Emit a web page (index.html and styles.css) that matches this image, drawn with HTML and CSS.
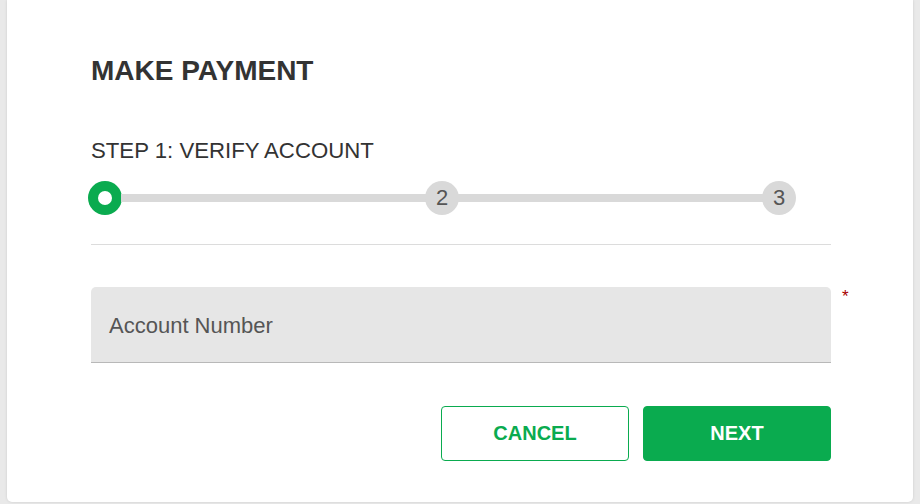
FILE: index.html
```html
<!DOCTYPE html>
<html lang="en">
<head>
<meta charset="utf-8">
<title>Make Payment</title>
<link rel="stylesheet" href="styles.css">
</head>
<body>
<div class="page">
  <section class="card">
    <h1 class="title">MAKE PAYMENT</h1>
    <div class="step-label">STEP 1: VERIFY ACCOUNT</div>
    <div class="stepper">
      <span class="dot dot-active"><span class="dot-inner"></span></span>
      <span class="track"></span>
      <span class="dot">2</span>
      <span class="track"></span>
      <span class="dot">3</span>
    </div>
    <hr class="divider">
    <div class="field">
      <div class="input">Account Number</div>
      <span class="required">*</span>
    </div>
    <div class="actions">
      <button class="btn btn-outline">CANCEL</button>
      <button class="btn btn-primary">NEXT</button>
    </div>
  </section>
</div>
</body>
</html>
```

FILE: styles.css
```css
html, body {
  margin: 0;
  padding: 0;
  background: #e9e9e9;
  font-family: "Liberation Sans", Arial, sans-serif;
}

.page {
  padding: 0 7px 2px 7px;
  width: 920px;
  height: 504px;
  box-sizing: border-box;
}

.card {
  background: #ffffff;
  height: 502px;
  box-sizing: border-box;
  border-radius: 0 0 5px 5px;
  box-shadow: 0 0 3px rgba(0, 0, 0, 0.12);
  padding: 55px 82px 0 84px;
  display: flex;
  flex-direction: column;
}

.title {
  margin: 0;
  font-size: 28px;
  line-height: 32px;
  font-weight: bold;
  color: #333333;
}

.step-label {
  margin-top: 51px;
  font-size: 22.2px;
  line-height: 26px;
  color: #333333;
}

.stepper {
  margin-top: 17px;
  margin-left: -3px;
  width: 708px;
  height: 34px;
  display: flex;
  align-items: center;
}

.dot {
  width: 34px;
  height: 34px;
  border-radius: 50%;
  background: #d9d9d9;
  color: #555555;
  font-size: 22px;
  display: flex;
  align-items: center;
  justify-content: center;
  flex: none;
}

.dot-active {
  background: #0aab4f;
}

.dot-inner {
  width: 14px;
  height: 14px;
  border-radius: 50%;
  background: #ffffff;
}

.track {
  flex: 1;
  height: 8px;
  background: #d9d9d9;
  margin: 0 -1px;
}

.divider {
  margin: 29px 0 0 0;
  border: none;
  border-top: 1px solid #dcdcdc;
  height: 0;
}

.field {
  position: relative;
  margin-top: 42px;
}

.input {
  background: #e6e6e6;
  border-bottom: 1px solid #b8b8b8;
  border-radius: 5px 5px 0 0;
  padding-left: 18px;
  padding-top: 2px;
  height: 73px;
  display: flex;
  align-items: center;
  font-size: 22px;
  color: #555555;
}

.required {
  position: absolute;
  left: calc(100% + 11px);
  top: 0;
  color: #a80000;
  font-size: 17px;
  line-height: 20px;
}

.actions {
  margin-top: 43px;
  display: flex;
  justify-content: flex-end;
  gap: 14px;
}

.btn {
  width: 188px;
  height: 55px;
  border-radius: 4px;
  font-family: "Liberation Sans", Arial, sans-serif;
  font-size: 20px;
  font-weight: bold;
  cursor: pointer;
  box-sizing: border-box;
}

.btn-outline {
  background: #ffffff;
  border: 1px solid #0aab4f;
  color: #0aab4f;
}

.btn-primary {
  background: #0aab4f;
  border: 1px solid #0aab4f;
  color: #ffffff;
}
```
